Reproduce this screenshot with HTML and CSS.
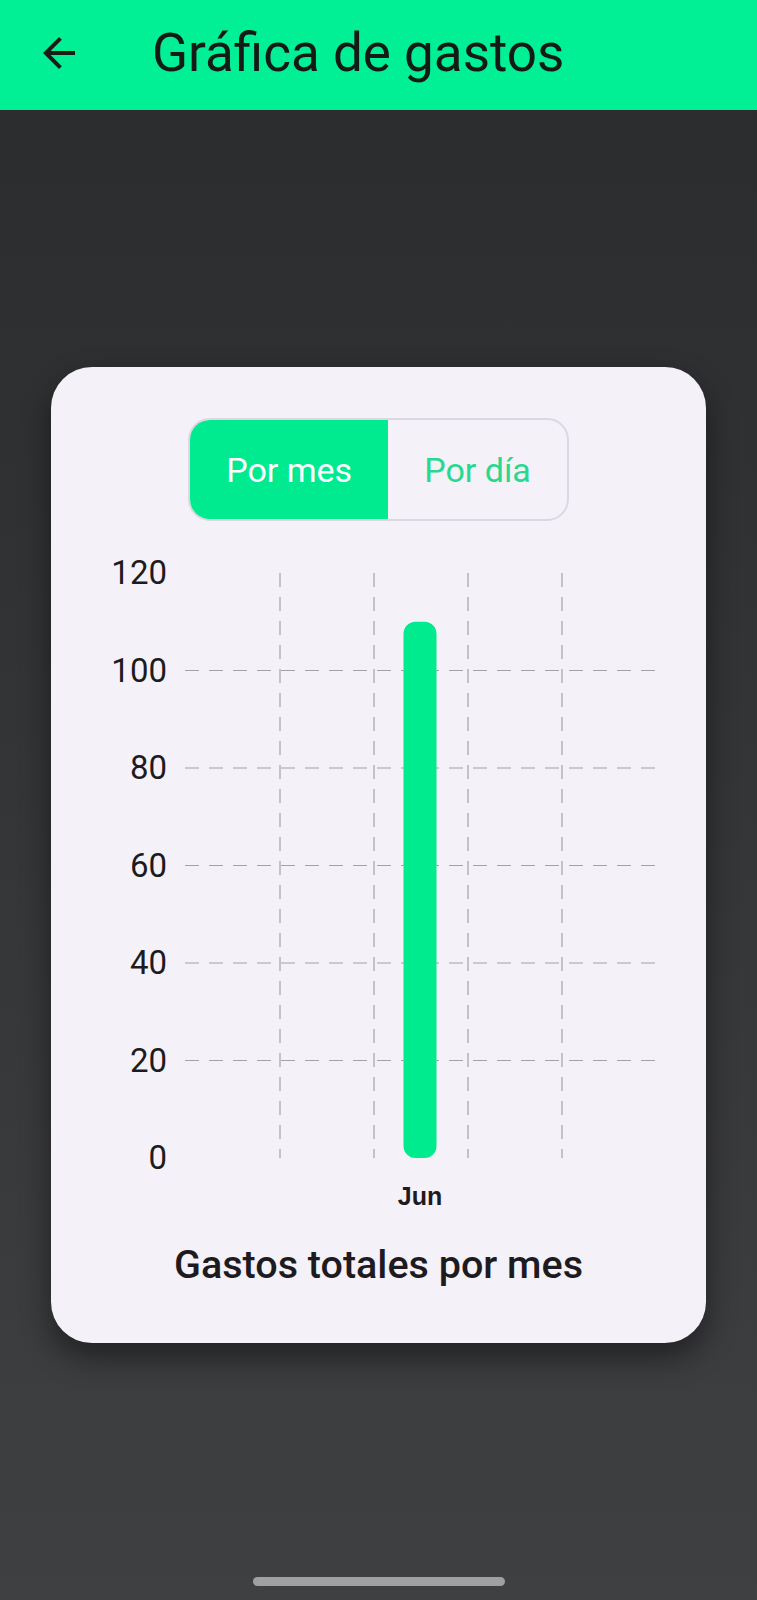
FILE: index.html
```html
<!DOCTYPE html>
<html lang="es">
<head>
  <meta charset="UTF-8" />
  <meta name="viewport" content="width=device-width, initial-scale=1.0"/>
  <title>Gráfica de gastos</title>
  <link rel="stylesheet" href="styles.css">
</head>
<body>
  <header class="app-bar">
    <button class="back-btn" aria-label="Volver">
      <svg viewBox="0 0 24 24" width="48" height="48">
        <path d="M20 11H7.83l5.59-5.59L12 4l-8 8 8 8 1.41-1.41L7.83 13H20v-2z" fill="#1a1c1a"/>
      </svg>
    </button>
    <h1 class="app-title">Gráfica de gastos</h1>
  </header>

  <main class="content">
    <section class="card">
      <div class="segmented">
        <button class="segment active">Por mes</button>
        <button class="segment">Por día</button>
      </div>

      <div class="chart">
        <div class="y-axis">
          <span>120</span>
          <span>100</span>
          <span>80</span>
          <span>60</span>
          <span>40</span>
          <span>20</span>
          <span>0</span>
        </div>
        <div class="plot-col">
          <svg class="plot" width="470" height="585" viewBox="0 0 470 585">
            <g stroke="#a3a2a8" stroke-width="1.2" stroke-dasharray="14 10" fill="none">
              <line x1="0" y1="97.5" x2="470" y2="97.5"/>
              <line x1="0" y1="195" x2="470" y2="195"/>
              <line x1="0" y1="292.5" x2="470" y2="292.5"/>
              <line x1="0" y1="390" x2="470" y2="390"/>
              <line x1="0" y1="487.5" x2="470" y2="487.5"/>
              <line x1="95" y1="0" x2="95" y2="585"/>
              <line x1="189" y1="0" x2="189" y2="585"/>
              <line x1="283" y1="0" x2="283" y2="585"/>
              <line x1="377" y1="0" x2="377" y2="585"/>
            </g>
            <!-- Jun: 110 -->
            <rect x="218.5" y="48.75" width="33" height="536.25" rx="12" fill="#00ea8e"/>
          </svg>
          <div class="x-label">Jun</div>
        </div>
      </div>

      <h2 class="chart-title">Gastos totales por mes</h2>
    </section>
  </main>

  <div class="home-indicator"></div>
</body>
</html>
```

FILE: styles.css
```css
* { box-sizing: border-box; }
body {
  margin: 0;
  min-height: 1600px;
  font-family: Roboto, 'Noto Sans', sans-serif;
  background: linear-gradient(180deg, #292b2d 0%, #333537 50%, #3f4042 100%);
  display: flex;
  flex-direction: column;
}

.app-bar {
  height: 110px;
  background-color: #02f095;
  display: flex;
  align-items: center;
  padding: 0 0 4px 35px;
}

.back-btn {
  width: 48px;
  height: 48px;
  padding: 0;
  border: none;
  background: none;
  display: flex;
}

.app-title {
  margin: 0 0 0 69px;
  font-size: 53px;
  font-weight: 400;
  line-height: 1;
  color: #141a16;
}

.content {
  flex: 1;
  padding: 257px 51px 0;
}

.card {
  height: 976px;
  background-color: #f5f1f8;
  border-radius: 41px;
  box-shadow: 0 14px 30px rgba(0, 0, 0, 0.45);
  padding-top: 51px;
  display: flex;
  flex-direction: column;
}

.segmented {
  align-self: center;
  display: flex;
  height: 103px;
  border: 2px solid #dcd7e0;
  border-radius: 22px;
  overflow: hidden;
}

.segment {
  border: none;
  background: none;
  padding: 0 36px;
  font-family: inherit;
  font-size: 34px;
  color: #27d98e;
}

.segment.active {
  background-color: #00eb8f;
  color: #ffffff;
}

.chart {
  display: flex;
  gap: 18px;
  margin: 3px 0 0 34px;
}

.y-axis {
  width: 82px;
  display: flex;
  flex-direction: column;
}

.y-axis span {
  height: 97.5px;
  display: flex;
  align-items: center;
  justify-content: flex-end;
  font-size: 33px;
  color: #1d1b20;
}

.plot-col {
  display: flex;
  flex-direction: column;
  padding-top: 49px;
}

.plot {
  display: block;
}

.x-label {
  margin-top: 26px;
  text-align: center;
  font-family: 'Liberation Sans', Arial, sans-serif;
  font-weight: 700;
  font-size: 25px;
  line-height: 1;
  color: #1d1b20;
}

.chart-title {
  margin: 32px 0 0;
  text-align: center;
  font-size: 39.5px;
  font-weight: 500;
  color: #1d1b20;
}

.home-indicator {
  align-self: center;
  width: 252px;
  height: 9px;
  margin: 0 0 14px 0;
  border-radius: 5px;
  background-color: #9fa0a2;
}
```
